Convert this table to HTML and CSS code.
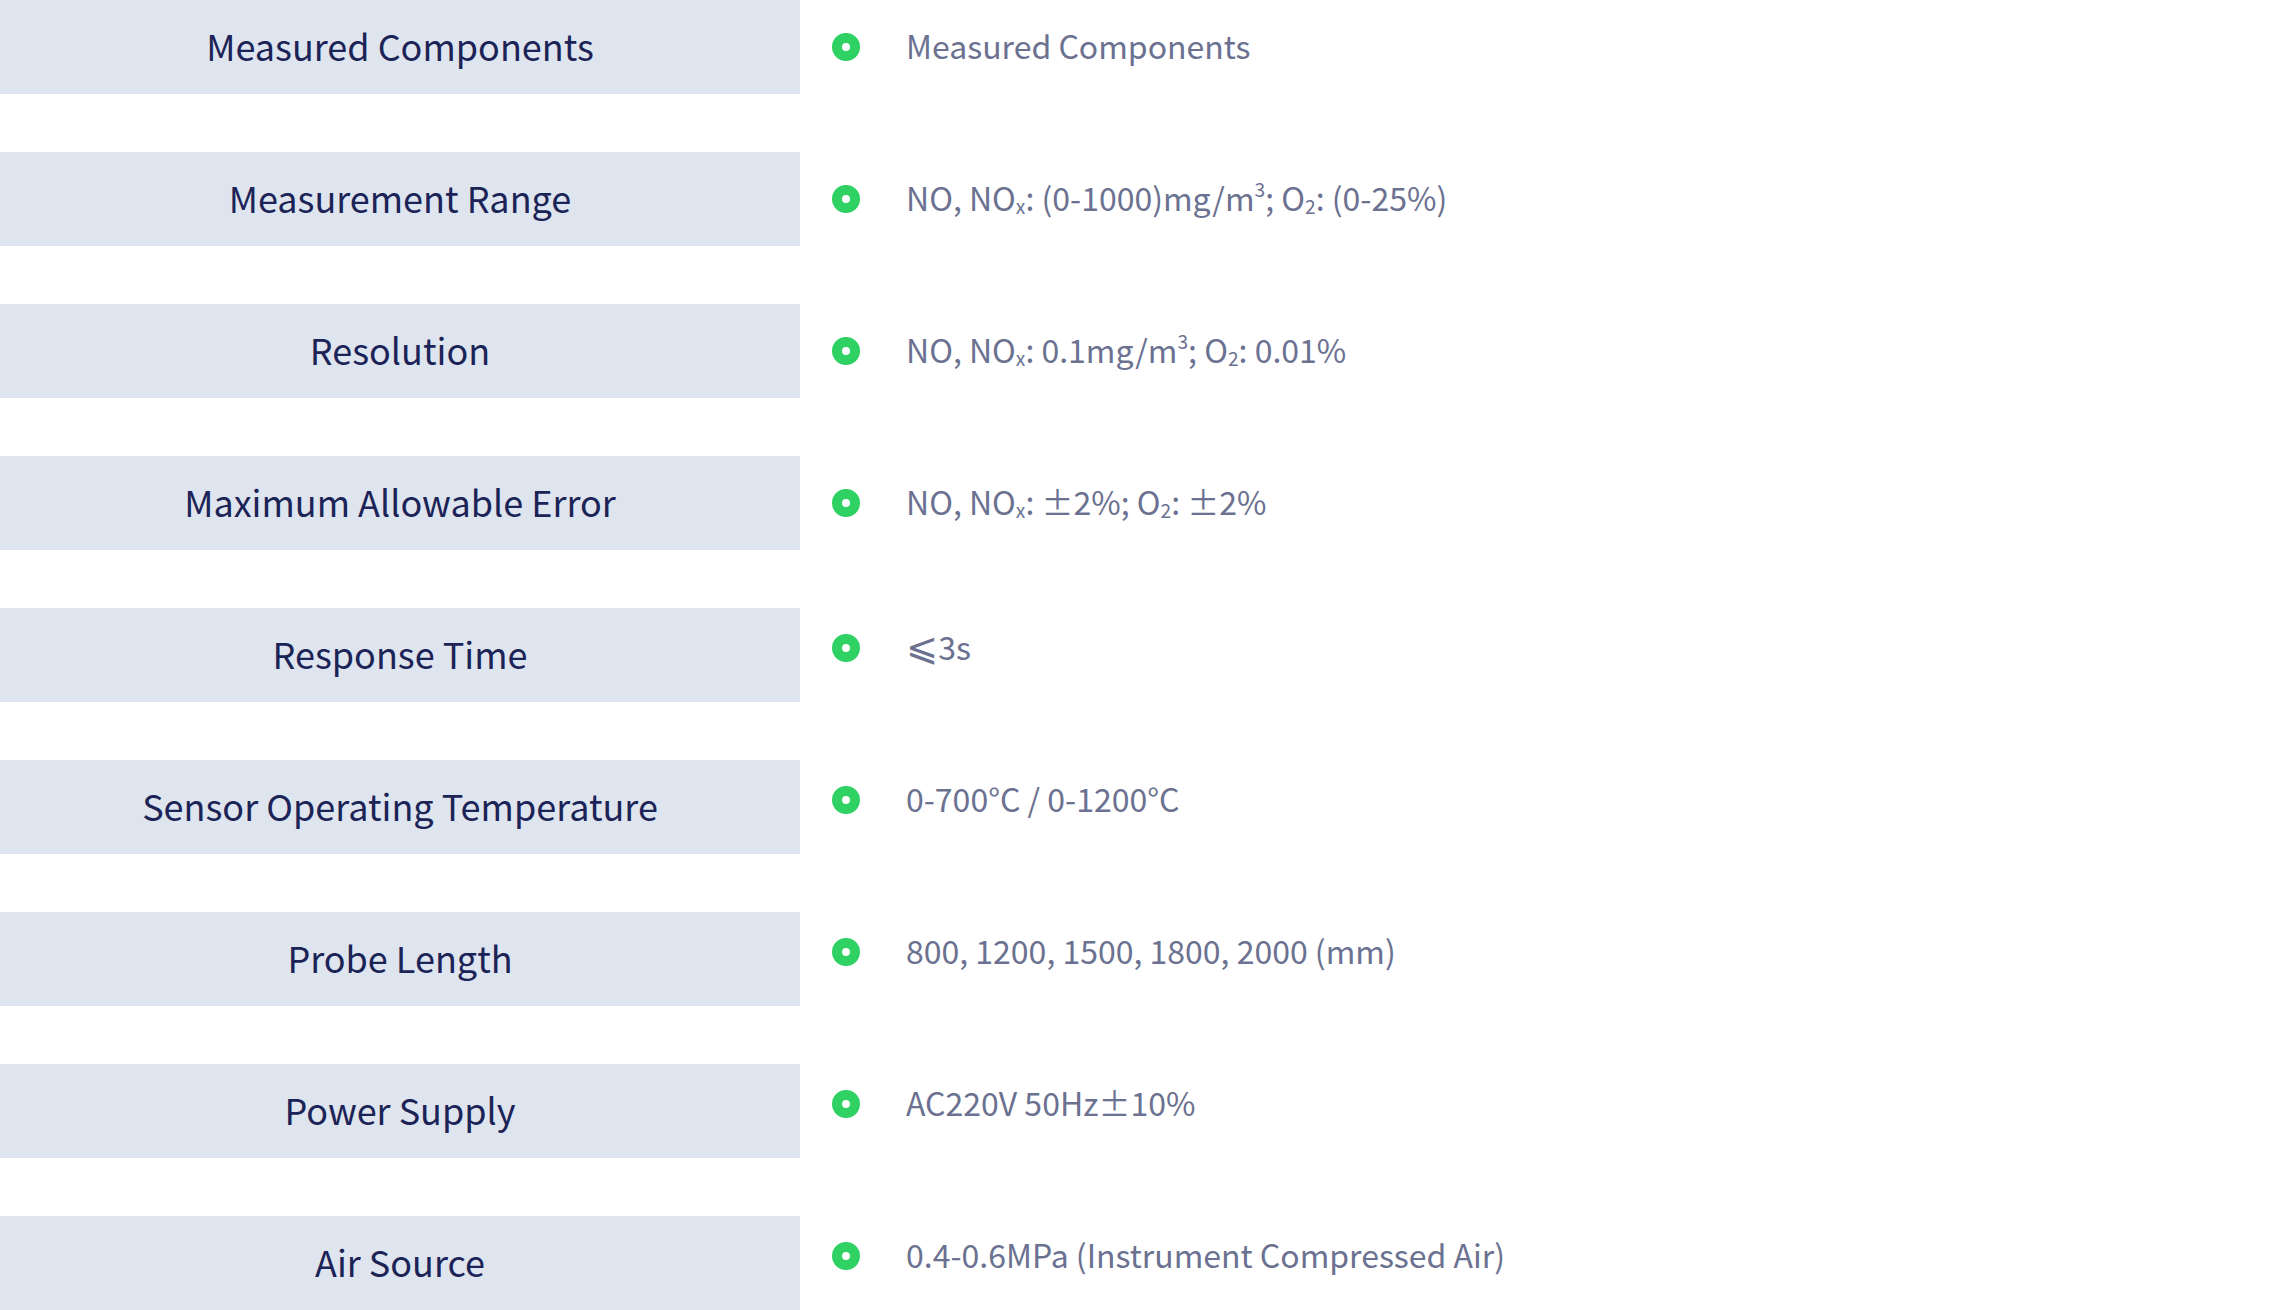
FILE: index.html
```html
<!DOCTYPE html>
<html lang="en">
<head>
<meta charset="utf-8">
<title>Specifications</title>
<link rel="stylesheet" href="styles.css">
</head>
<body>
<div class="spec-list">
  <div class="spec-row">
    <div class="spec-label">Measured Components</div>
    <div class="spec-value"><span class="dot"></span><span class="spec-text">Measured Components</span></div>
  </div>
  <div class="spec-row">
    <div class="spec-label">Measurement Range</div>
    <div class="spec-value"><span class="dot"></span><span class="spec-text">NO, NO<sub>x</sub>: (0-1000)mg/m<sup>3</sup>; O<sub>2</sub>: (0-25%)</span></div>
  </div>
  <div class="spec-row">
    <div class="spec-label">Resolution</div>
    <div class="spec-value"><span class="dot"></span><span class="spec-text">NO, NO<sub>x</sub>: 0.1mg/m<sup>3</sup>; O<sub>2</sub>: 0.01%</span></div>
  </div>
  <div class="spec-row">
    <div class="spec-label">Maximum Allowable Error</div>
    <div class="spec-value"><span class="dot"></span><span class="spec-text">NO, NO<sub>x</sub>: ±2%; O<sub>2</sub>: ±2%</span></div>
  </div>
  <div class="spec-row">
    <div class="spec-label">Response Time</div>
    <div class="spec-value raised"><span class="dot"></span><span class="spec-text"><span class="le">⩽</span>3s</span></div>
  </div>
  <div class="spec-row">
    <div class="spec-label">Sensor Operating Temperature</div>
    <div class="spec-value raised"><span class="dot"></span><span class="spec-text">0-700°C / 0-1200°C</span></div>
  </div>
  <div class="spec-row">
    <div class="spec-label">Probe Length</div>
    <div class="spec-value raised"><span class="dot"></span><span class="spec-text">800, 1200, 1500, 1800, 2000 (mm)</span></div>
  </div>
  <div class="spec-row">
    <div class="spec-label">Power Supply</div>
    <div class="spec-value raised"><span class="dot"></span><span class="spec-text">AC220V 50Hz±10%</span></div>
  </div>
  <div class="spec-row">
    <div class="spec-label">Air Source</div>
    <div class="spec-value raised"><span class="dot"></span><span class="spec-text">0.4-0.6MPa (Instrument Compressed Air)</span></div>
  </div>
</div>
</body>
</html>
```

FILE: styles.css
```css
html, body {
  margin: 0;
  padding: 0;
  background: #ffffff;
}

body {
  font-family: "Noto Sans CJK SC", "Noto Sans", sans-serif;
}

.spec-list {
  display: flex;
  flex-direction: column;
  gap: 58px;
}

.spec-row {
  display: flex;
  align-items: stretch;
  height: 94px;
}

.spec-label {
  flex: 0 0 800px;
  width: 800px;
  background: #dfe5ee;
  color: #1b2357;
  font-size: 36px;
  line-height: 1;
  padding-bottom: 5px;
  box-sizing: border-box;
  display: flex;
  align-items: center;
  justify-content: center;
}

.spec-value {
  display: flex;
  align-items: center;
  padding-left: 32px;
  color: #6b7190;
  font-size: 32px;
  line-height: 1;
}

.spec-value.raised {
  padding-bottom: 14px;
}

.dot {
  flex: 0 0 auto;
  width: 8px;
  height: 8px;
  border: 10px solid #2ed162;
  border-radius: 50%;
  background: #ffffff;
  margin-right: 46px;
}

.spec-text {
  white-space: nowrap;
  padding-bottom: 4px;
}

.spec-text sub,
.spec-text sup {
  font-size: 0.6em;
  line-height: 0;
}

.spec-text sub {
  vertical-align: -0.18em;
}

.spec-text sup {
  vertical-align: 0.75em;
}

.le {
  font-family: "DejaVu Sans", "Noto Sans CJK SC", sans-serif;
  font-size: 1.2em;
  line-height: 0;
}
```
